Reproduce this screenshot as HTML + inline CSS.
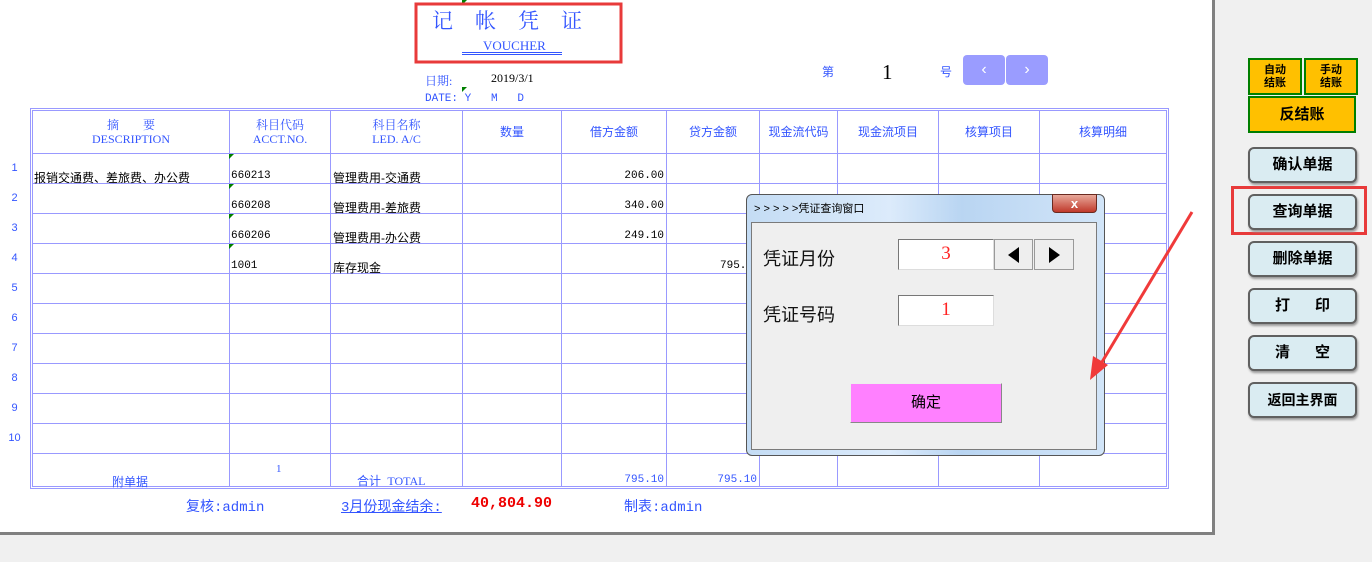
<!DOCTYPE html>
<html><head><meta charset="utf-8">
<style>
*{margin:0;padding:0;box-sizing:border-box}
body{width:1372px;height:562px;background:#f0f0f0;position:relative;overflow:hidden;font-family:"Liberation Sans","Noto Sans CJK SC",sans-serif}
.a{position:absolute;white-space:nowrap}
.b{color:#3355ff}
.s{font-family:"Liberation Serif","Noto Serif CJK SC",serif}
.m{font-family:"Liberation Mono","Noto Sans CJK SC",monospace}
.btn{position:absolute;left:1248px;width:109px;height:36px;background:#daecf2;border:2px solid #606060;border-radius:6px;font-weight:bold;font-size:15px;text-align:center;line-height:32px;box-shadow:1px 2px 2px #999}
.g{position:absolute;background:#ffc000;border:2px solid #007f00;font-weight:bold;text-align:center}
.hd{position:absolute;top:110px;height:43px;font-size:12px;color:#3355ff;text-align:center;line-height:14px;display:flex;flex-direction:column;justify-content:center}
.t{position:absolute;font-size:12px;color:#000}
.rn{position:absolute;left:0;width:29px;text-align:center;font-size:11px;color:#3355ff}
</style></head><body>
<div class="a" style="left:0;top:0;width:1212px;height:532px;background:#fff"></div>
<div class="a" style="left:1212px;top:0;width:3px;height:535px;background:#808080"></div>
<div class="a" style="left:0;top:532px;width:1215px;height:3px;background:#808080"></div>

<svg class="a" style="left:0;top:0" width="1372" height="562">
<g stroke="#9999ff" stroke-width="1" fill="none">
<rect x="30.5" y="108.5" width="1138" height="380"/>
<rect x="32.5" y="110.5" width="1134" height="376"/>
<path d="M229.5 110V487M330.5 110V487M462.5 110V487M561.5 110V487M666.5 110V487M759.5 110V487M837.5 110V487M938.5 110V487M1039.5 110V487"/>
<path d="M32 153.5H1167M32 183.5H1167M32 213.5H1167M32 243.5H1167M32 273.5H1167M32 303.5H1167M32 333.5H1167M32 363.5H1167M32 393.5H1167M32 423.5H1167M32 453.5H1167"/>
</g>
<g fill="#008000">
<path d="M229 154h5l-5 5z"/><path d="M229 184h5l-5 5z"/><path d="M229 214h5l-5 5z"/><path d="M229 244h5l-5 5z"/>
<path d="M462 0h5l-5 5z"/><path d="M462 87h5l-5 5z"/>
</g>
<rect x="416" y="4" width="205" height="58" fill="none" stroke="#e83a3a" stroke-width="3"/>
<rect x="1232.5" y="187.5" width="133" height="46" fill="none" stroke="#e83a3a" stroke-width="3"/>
<line x1="462" y1="52.5" x2="562" y2="52.5" stroke="#3355ff"/><line x1="462" y1="54.5" x2="562" y2="54.5" stroke="#3355ff"/>
</svg>

<div class="a b s" style="left:432px;top:5px;font-size:21px;letter-spacing:22px">记帐凭证</div>
<div class="a b s" style="left:483px;top:38px;font-size:13px">VOUCHER</div>
<div class="a b s" style="left:425px;top:72px;font-size:12px">日期:</div>
<div class="a s" style="left:491px;top:71px;font-size:12px">2019/3/1</div>
<div class="a b m" style="left:425px;top:93px;font-size:11px">DATE: Y&nbsp;&nbsp;&nbsp;M&nbsp;&nbsp;&nbsp;D</div>
<div class="a b" style="left:822px;top:63px;font-size:12px">第</div>
<div class="a s" style="left:882px;top:60px;font-size:21px">1</div>
<div class="a b" style="left:940px;top:63px;font-size:12px">号</div>
<div class="a" style="left:963px;top:55px;width:42px;height:30px;background:#9a9cff;border-radius:4px;color:#fff;text-align:center;line-height:30px;font-size:16px">‹</div>
<div class="a" style="left:1006px;top:55px;width:42px;height:30px;background:#9a9cff;border-radius:4px;color:#fff;text-align:center;line-height:30px;font-size:16px">›</div>

<div class="hd s" style="left:33px;width:196px"><span>摘&nbsp;&nbsp;&nbsp;&nbsp;&nbsp;&nbsp;&nbsp;&nbsp;要</span><span>DESCRIPTION</span></div>
<div class="hd s" style="left:230px;width:100px"><span>科目代码</span><span>ACCT.NO.</span></div>
<div class="hd s" style="left:331px;width:131px"><span>科目名称</span><span>LED. A/C</span></div>
<div class="hd" style="left:463px;width:98px">数量</div>
<div class="hd" style="left:562px;width:104px">借方金额</div>
<div class="hd" style="left:667px;width:92px">贷方金额</div>
<div class="hd" style="left:760px;width:77px">现金流代码</div>
<div class="hd" style="left:838px;width:100px">现金流项目</div>
<div class="hd" style="left:939px;width:100px">核算项目</div>
<div class="hd" style="left:1040px;width:126px">核算明细</div>

<div class="rn" style="top:162px">1</div><div class="rn" style="top:192px">2</div><div class="rn" style="top:222px">3</div><div class="rn" style="top:252px">4</div><div class="rn" style="top:282px">5</div><div class="rn" style="top:312px">6</div><div class="rn" style="top:342px">7</div><div class="rn" style="top:372px">8</div><div class="rn" style="top:402px">9</div><div class="rn" style="top:432px">10</div>

<div class="t" style="left:34px;top:169px">报销交通费、差旅费、办公费</div>
<div class="t m" style="left:231px;top:170px;font-size:11px">660213</div>
<div class="t m" style="left:231px;top:200px;font-size:11px">660208</div>
<div class="t m" style="left:231px;top:230px;font-size:11px">660206</div>
<div class="t m" style="left:231px;top:260px;font-size:11px">1001</div>
<div class="t" style="left:333px;top:169px">管理费用-交通费</div>
<div class="t" style="left:333px;top:199px">管理费用-差旅费</div>
<div class="t" style="left:333px;top:229px">管理费用-办公费</div>
<div class="t" style="left:333px;top:259px">库存现金</div>
<div class="t m" style="left:562px;width:102px;text-align:right;top:170px;font-size:11px">206.00</div>
<div class="t m" style="left:562px;width:102px;text-align:right;top:200px;font-size:11px">340.00</div>
<div class="t m" style="left:562px;width:102px;text-align:right;top:230px;font-size:11px">249.10</div>
<div class="t m" style="left:720px;top:260px;font-size:11px">795.</div>

<div class="a b" style="left:112px;top:473px;font-size:12px">附单据</div>
<div class="a b s" style="left:276px;top:463px;font-size:11px">1</div>
<div class="a b" style="left:357px;top:472px;font-size:12px">合计 <span class="s">&nbsp;TOTAL</span></div>
<div class="a b m" style="left:562px;width:102px;text-align:right;top:474px;font-size:11px">795.10</div>
<div class="a b m" style="left:667px;width:90px;text-align:right;top:474px;font-size:11px">795.10</div>

<div class="a b m" style="left:186px;top:496px;font-size:14px">复核:admin</div>
<div class="a b m" style="left:341px;top:496px;font-size:14px;text-decoration:underline">3月份现金结余:</div>
<div class="a m" style="left:471px;top:495px;font-size:15px;color:#e00;font-weight:bold">40,804.90</div>
<div class="a b m" style="left:624px;top:496px;font-size:14px">制表:admin</div>

<!-- dialog -->
<div class="a" style="left:746px;top:194px;width:359px;height:262px;background:linear-gradient(90deg,#c4dcf4,#dcebfb 40%,#b9d5f2 60%,#d2e5f8);border:1px solid #555;border-radius:6px"></div>
<div class="a" style="left:754px;top:200px;font-size:11px;color:#000">&gt; &gt; &gt; &gt; &gt;凭证查询窗口</div>
<div class="a" style="left:1052px;top:194px;width:45px;height:19px;background:linear-gradient(#e8a89a,#c0392b);border:1px solid #6a2a20;border-radius:0 0 4px 4px;color:#fff;text-align:center;font-weight:bold;font-size:13px;line-height:17px">x</div>
<div class="a" style="left:751px;top:222px;width:346px;height:228px;background:#efefef;border:1px solid #7a7a7a"></div>
<div class="a" style="left:763px;top:245px;font-size:18px;color:#111">凭证月份</div>
<div class="a" style="left:763px;top:301px;font-size:18px;color:#111">凭证号码</div>
<div class="a s" style="left:898px;top:239px;width:96px;height:31px;background:#fff;border:1px solid #777;border-right-color:#ddd;border-bottom-color:#ddd;color:#f22;text-align:center;font-size:19px;line-height:28px">3</div>
<div class="a s" style="left:898px;top:295px;width:96px;height:31px;background:#fff;border:1px solid #777;border-right-color:#ddd;border-bottom-color:#ddd;color:#f22;text-align:center;font-size:19px;line-height:28px">1</div>
<div class="a" style="left:994px;top:239px;width:39px;height:31px;background:#eee;border:1px solid #999"><svg width="37" height="29"><path d="M24 7V23L13 15z" fill="#000"/></svg></div>
<div class="a" style="left:1034px;top:239px;width:40px;height:31px;background:#eee;border:1px solid #999"><svg width="38" height="29"><path d="M14 7V23L25 15z" fill="#000"/></svg></div>
<div class="a" style="left:850px;top:383px;width:152px;height:40px;background:#ff80ff;border:1px solid #888;border-top-color:#eee;border-left-color:#eee;text-align:center;line-height:38px;font-size:15px">确定</div>

<svg class="a" style="left:0;top:0" width="1372" height="562">
<line x1="1192" y1="212" x2="1102" y2="362" stroke="#f03a3a" stroke-width="3"/>
<path d="M1090 380l3-24 15 9z" fill="#f03a3a"/>
</svg>

<div class="g" style="left:1248px;top:58px;width:54px;height:37px;font-size:11px;line-height:13px;padding-top:4px">自动<br>结账</div>
<div class="g" style="left:1304px;top:58px;width:54px;height:37px;font-size:11px;line-height:13px;padding-top:4px">手动<br>结账</div>
<div class="g" style="left:1248px;top:96px;width:108px;height:37px;font-size:15px;line-height:33px">反结账</div>
<div class="btn" style="top:147px">确认单据</div>
<div class="btn" style="top:194px">查询单据</div>
<div class="btn" style="top:241px">删除单据</div>
<div class="btn" style="top:288px">打&nbsp;&nbsp;&nbsp;&nbsp;&nbsp;&nbsp;印</div>
<div class="btn" style="top:335px">清&nbsp;&nbsp;&nbsp;&nbsp;&nbsp;&nbsp;空</div>
<div class="btn" style="top:382px;font-size:14px">返回主界面</div>
</body></html>
